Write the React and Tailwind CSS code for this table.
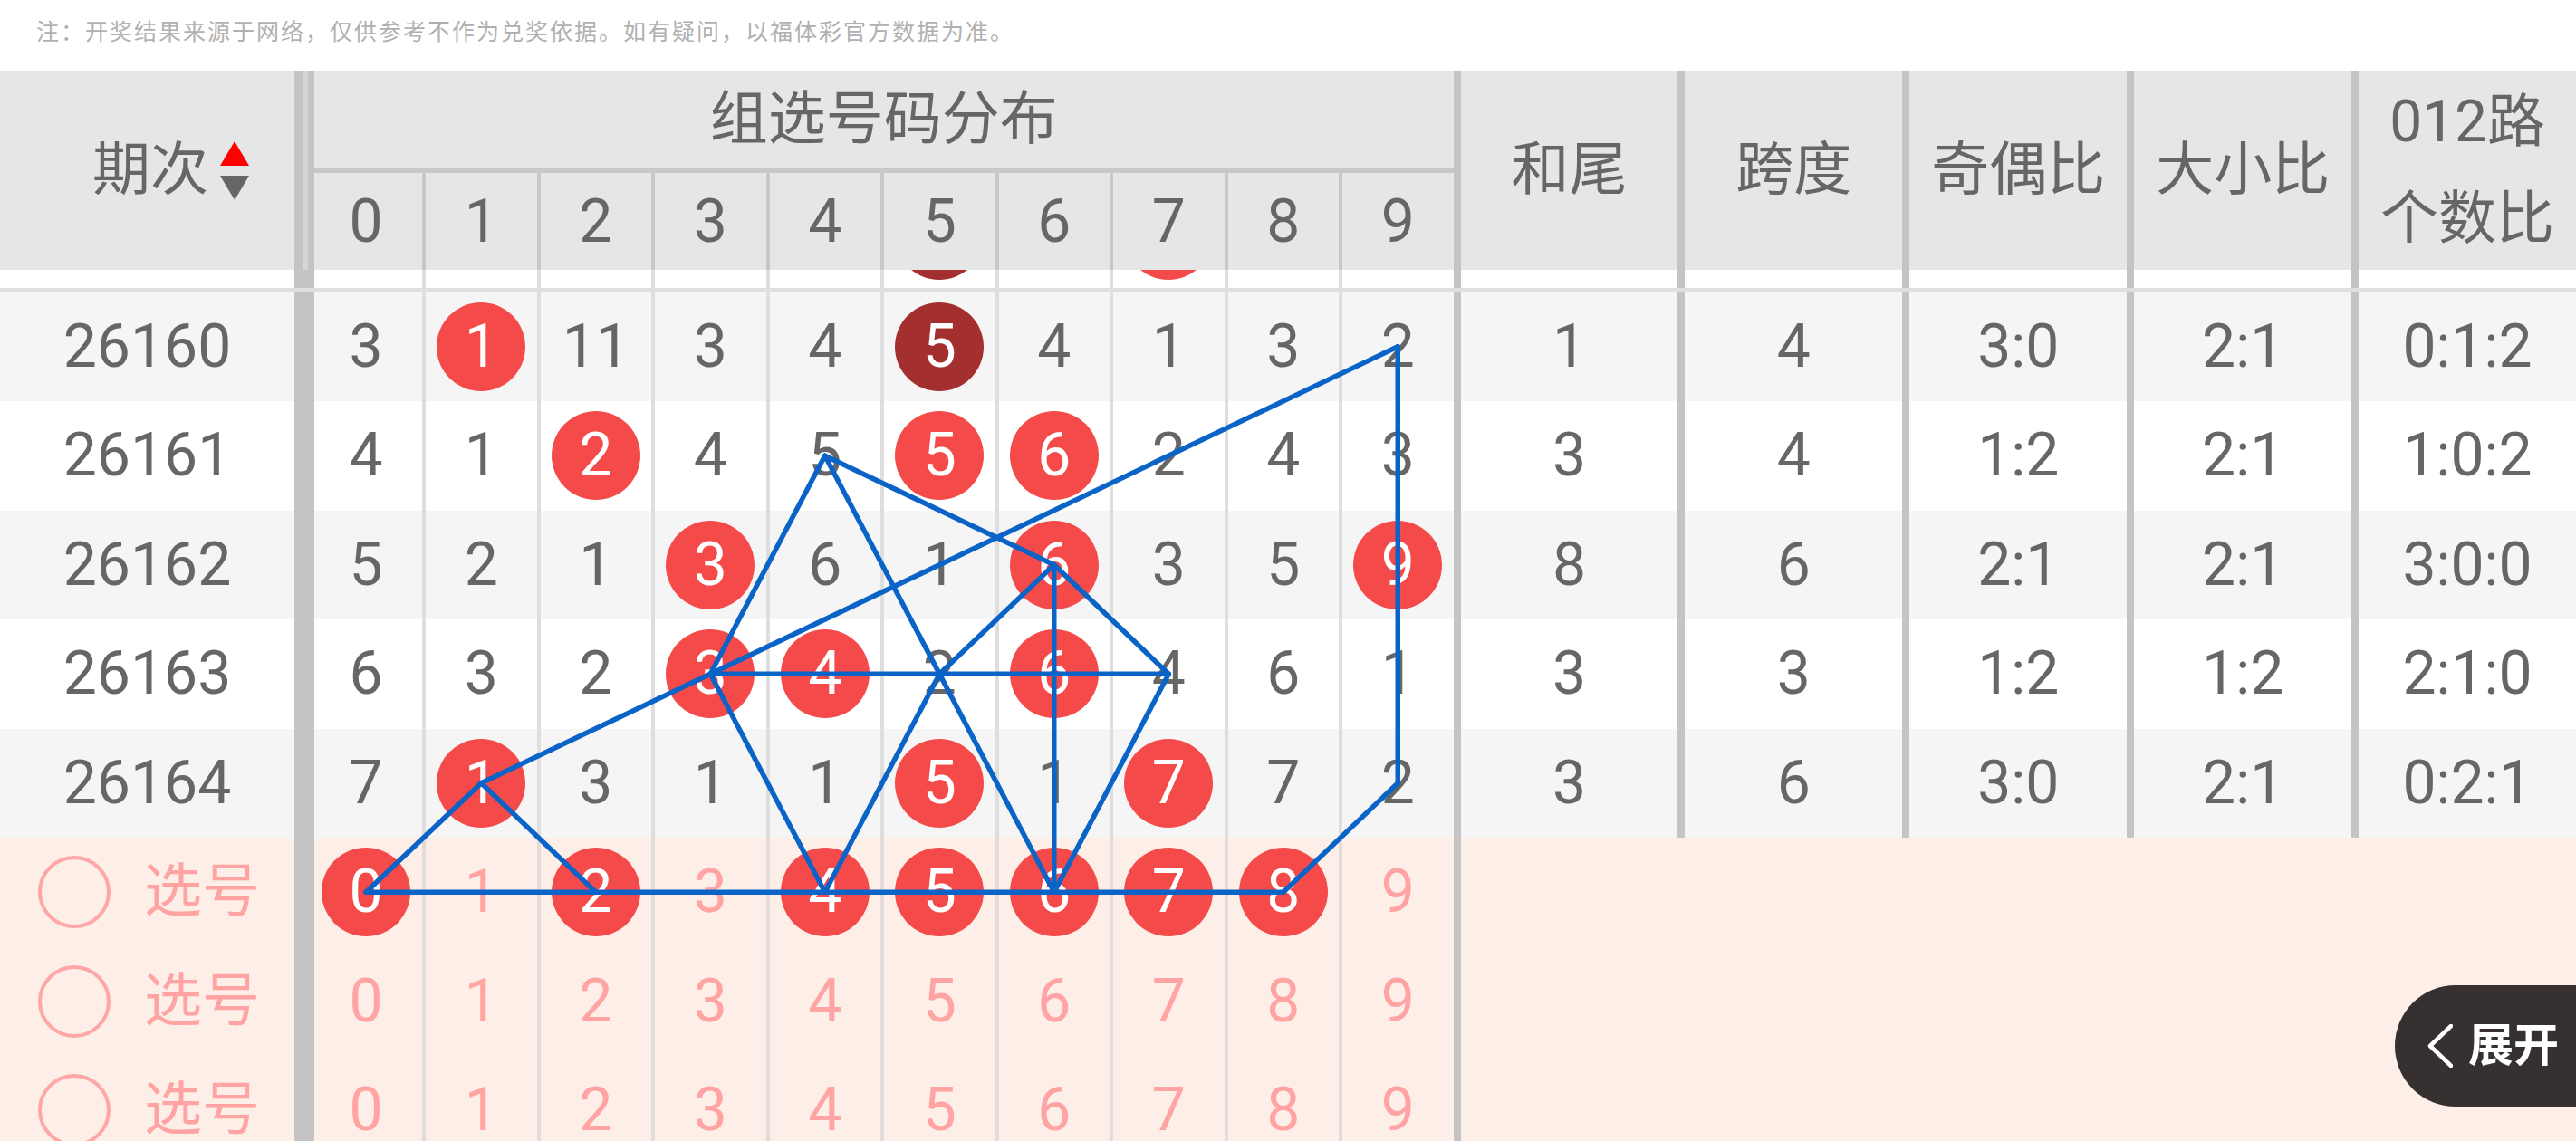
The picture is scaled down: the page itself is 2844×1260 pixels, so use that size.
import React from "react";

const FONT = "font-['Roboto','Noto_Sans_CJK_SC',sans-serif]";

const rows = [
  { id: "26160", cells: [3, { v: 1 }, 11, 3, 4, { v: 5, d: true }, 4, 1, 3, 2], stats: ["1", "4", "3:0", "2:1", "0:1:2"] },
  { id: "26161", cells: [4, 1, { v: 2 }, 4, 5, { v: 5 }, { v: 6 }, 2, 4, 3], stats: ["3", "4", "1:2", "2:1", "1:0:2"] },
  { id: "26162", cells: [5, 2, 1, { v: 3 }, 6, 1, { v: 6 }, 3, 5, { v: 9 }], stats: ["8", "6", "2:1", "2:1", "3:0:0"] },
  { id: "26163", cells: [6, 3, 2, { v: 3 }, { v: 4 }, 2, { v: 6 }, 4, 6, 1], stats: ["3", "3", "1:2", "1:2", "2:1:0"] },
  { id: "26164", cells: [7, { v: 1 }, 3, 1, 1, { v: 5 }, 1, { v: 7 }, 7, 2], stats: ["3", "6", "3:0", "2:1", "0:2:1"] },
];

// previous draw, scrolled almost entirely under the sticky header: only ball bottoms show
const hiddenRow = { cells: [null, null, null, null, null, { d: true }, null, {}, null, null] };

const selectRows = [[0, 2, 4, 5, 6, 7, 8], [], []];

const colX = (k) => (k === 0 ? 404 : 531.25 + (k - 1) * 126.5);
const rowY = (r) => 180.75 + r * 120.5;

const lines = [
  [0, 5, 8, 5],
  [0, 5, 1, 4],
  [1, 4, 2, 5],
  [1, 4, 9, 0],
  [9, 0, 9, 4],
  [9, 4, 8, 5],
  [4, 1, 3, 3],
  [4, 1, 6, 5],
  [4, 1, 6, 2],
  [6, 2, 5, 3],
  [5, 3, 4, 5],
  [6, 2, 6, 5],
  [6, 2, 7, 3],
  [3, 3, 7, 3],
  [3, 3, 4, 5],
  [6, 5, 7, 3],
];

function Ball({ v, dark }) {
  return (
    <div
      className={`w-[98px] h-[98px] rounded-full flex items-center justify-center text-white leading-none ${
        dark ? "bg-[#a42f2f]" : "bg-[#f54a4a]"
      }`}
    >
      {v}
    </div>
  );
}

function GridCell({ k, divider, children }) {
  return (
    <div
      className={`h-full flex items-center justify-center ${
        k === 0 ? "w-[119px] pr-[5px]" : `w-[126.5px] border-l-4 ${divider}`
      }`}
    >
      {children}
    </div>
  );
}

function HiddenRow() {
  return (
    <div className="flex h-[120.5px] pb-[4.5px] bg-[linear-gradient(to_bottom,#ffffff_116px,#dfdfdf_116px)]">
      <div className="w-[325px]" />
      <div className="w-[22px] bg-[#c4c4c4]" />
      {hiddenRow.cells.map((c, k) => (
        <GridCell key={k} k={k} divider="border-[#dedede]">
          {c ? <Ball dark={c.d} /> : null}
        </GridCell>
      ))}
      {[0, 1, 2, 3, 4].map((i) => (
        <div key={i} className="flex-1 h-full border-l-8 border-[#c4c4c4]" />
      ))}
    </div>
  );
}

function DataRow({ row, bg }) {
  return (
    <div className={`flex h-[120.5px] text-[66px] leading-none text-[#666] ${bg}`}>
      <div className="w-[325px] flex items-center justify-center">{row.id}</div>
      <div className="w-[22px] bg-[#c4c4c4]" />
      {row.cells.map((c, k) => (
        <GridCell key={k} k={k} divider="border-[#dedede]">
          {typeof c === "object" ? <Ball v={c.v} dark={c.d} /> : c}
        </GridCell>
      ))}
      {row.stats.map((s, i) => (
        <div key={i} className="flex-1 h-full border-l-8 border-[#c4c4c4] flex items-center justify-center">
          {s}
        </div>
      ))}
    </div>
  );
}

function SelectRow({ sel }) {
  return (
    <div className="flex h-[120.5px] bg-[#fdeee8] text-[66px] leading-none text-[#ffa3a3]">
      <div className="w-[325px] flex items-center pl-[42px] gap-[37px]">
        <div className="w-[80px] h-[80px] rounded-full border-4 border-[#ffa6a6]" />
        <span className="text-[64px]">选号</span>
      </div>
      <div className="w-[22px] bg-[#c4c4c4]" />
      {Array.from({ length: 10 }, (_, k) => (
        <GridCell key={k} k={k} divider="border-[#e2dcda]">
          {sel.includes(k) ? <Ball v={k} /> : k}
        </GridCell>
      ))}
      <div className="flex-1 h-full border-l-8 border-[#c4c4c4]" />
    </div>
  );
}

export default function App() {
  return (
    <div className={`relative w-[2844px] h-[1260px] overflow-hidden bg-white ${FONT}`}>
      {/* notice */}
      <div className="h-[78px] flex items-center pl-[40px] pb-[6px] text-[25px] tracking-[2px] text-[#b0b0b0]">
        注：开奖结果来源于网络，仅供参考不作为兑奖依据。如有疑问，以福体彩官方数据为准。
      </div>

      {/* header */}
      <div className="flex h-[220px] bg-[#e6e6e6] text-[#666]">
        <div className="w-[325px] flex items-center justify-end pr-[50px] gap-[13px]">
          <span className="text-[64px] leading-[72px]">期次</span>
          <svg width="32" height="65" viewBox="0 0 32 65">
            <polygon points="16,0 32,27 0,27" fill="#ff0000" />
            <polygon points="0,38 32,38 16,65" fill="#666666" />
          </svg>
        </div>
        <div className="w-[22px] flex">
          <div className="w-[9px] bg-[#c4c4c4]" />
          <div className="w-[6px] bg-[#d6d6d6]" />
          <div className="w-[7px] bg-[#c4c4c4]" />
        </div>
        <div className="w-[1257.5px] flex flex-col">
          <div className="h-[107px] flex items-center justify-center text-[64px] leading-[80px]">组选号码分布</div>
          <div className="h-[6px] bg-[#c8c8c8]" />
          <div className="h-[107px] flex text-[66px] leading-[80px]">
            {Array.from({ length: 10 }, (_, k) => (
              <GridCell key={k} k={k} divider="border-[#c8c8c8]">
                {k}
              </GridCell>
            ))}
          </div>
        </div>
        {["和尾", "跨度", "奇偶比", "大小比"].map((t) => (
          <div key={t} className="flex-1 border-l-8 border-[#c4c4c4] flex items-center justify-center text-[64px] leading-[80px]">
            {t}
          </div>
        ))}
        <div className="flex-1 border-l-8 border-[#c4c4c4] flex flex-col items-center justify-center text-[64px] leading-[107px]">
          <span>012路</span>
          <span>个数比</span>
        </div>
      </div>

      {/* body (scrolled) */}
      <div className="h-[962px] overflow-hidden">
        <div className="relative mt-[-96px]">
          <HiddenRow />
          {rows.map((r, i) => (
            <DataRow key={r.id} row={r} bg={i % 2 === 0 ? "bg-[#f5f5f5]" : "bg-white"} />
          ))}
          {selectRows.map((s, i) => (
            <SelectRow key={i} sel={s} />
          ))}

          <svg className="absolute left-0 top-0 pointer-events-none" width="2844" height="1085" viewBox="0 0 2844 1085">
            {lines.map(([c1, r1, c2, r2], i) => (
              <line
                key={i}
                x1={colX(c1)}
                y1={rowY(r1)}
                x2={colX(c2)}
                y2={rowY(r2)}
                stroke="#0a63c6"
                strokeWidth="5.5"
                strokeLinecap="round"
              />
            ))}
          </svg>
        </div>
      </div>

      {/* expand button */}
      <div className="absolute right-0 top-[1088px] w-[200px] h-[134px] rounded-l-full bg-[#363130] flex items-center pl-[36px] gap-[17px]">
        <svg width="28" height="48" viewBox="0 0 28 48">
          <polyline points="26,2 3,24 26,46" fill="none" stroke="#ffffff" strokeWidth="4.5" strokeLinecap="round" strokeLinejoin="round" />
        </svg>
        <span className="text-[50px] font-bold text-white leading-none">展开</span>
      </div>
    </div>
  );
}
